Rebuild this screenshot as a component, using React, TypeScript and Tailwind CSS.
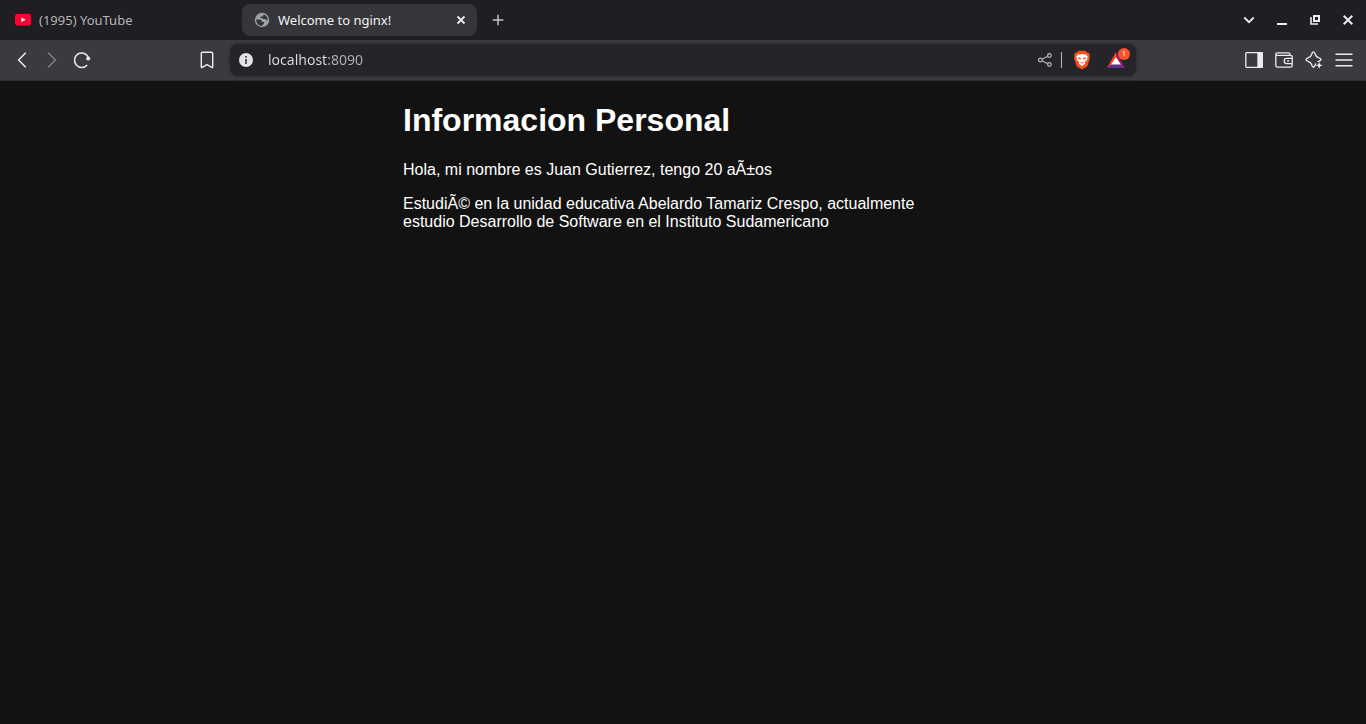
import type { ReactNode } from "react";

type IconButtonProps = {
  label: string;
  children: ReactNode;
  className?: string;
  disabled?: boolean;
};

function IconButton({ label, children, className = "", disabled }: IconButtonProps) {
  return (
    <button
      type="button"
      aria-label={label}
      disabled={disabled}
      className={`flex shrink-0 items-center justify-center ${className}`}
    >
      {children}
    </button>
  );
}

const stroke = { fill: "none", stroke: "currentColor" } as const;

function TabBar() {
  return (
    <header className="flex h-10 items-center justify-between bg-[#1f1e23] text-[#ececee]">
      <div className="flex items-center">
        <div className="w-[242px]">
          <a href="#youtube" className="flex items-center gap-2 pl-[15px] text-[13px] leading-5 text-[#b4b4b6]">
            <svg width="16" height="12" viewBox="0 0 16 12" aria-hidden="true">
              <rect width="16" height="11.5" rx="2.8" fill="#ff0033" />
              <path d="M6.3 3.5 10.7 5.8 6.3 8.1Z" fill="#fff" />
            </svg>
            (1995) YouTube
          </a>
        </div>
        <div className="flex h-8 w-[235px] items-center justify-between rounded-lg bg-[#36353a] pl-3 pr-2">
          <a href="#nginx" className="flex items-center gap-2 text-[13px] leading-5 text-[#f2f2f3]">
            <svg width="16" height="16" viewBox="0 0 16 16" aria-hidden="true">
              <circle cx="8" cy="8" r="7.2" fill="#9aa0a6" />
              <path
                d="M9.6 2.4C12 3.2 13.7 5.3 13.8 7.9L12.4 8.2C12 7.3 11.4 7 10.6 7H8.6V5.9H6.6V4.6H8C8.8 4.6 9.3 4 9.3 3.3Z M2.2 7.4H5.8C7 7.4 7.9 8.3 7.9 9.4V10.1H10V12.2H8.6V13.8C5.2 14 2.2 11.3 2.2 7.9Z"
                fill="#36353a"
              />
            </svg>
            Welcome to nginx!
          </a>
          <IconButton label="Close tab" className="size-4">
            <svg width="10" height="10" viewBox="0 0 10 10" {...stroke} strokeWidth="1.8">
              <path d="M1.5 1.5 8.5 8.5M8.5 1.5 1.5 8.5" />
            </svg>
          </IconButton>
        </div>
        <IconButton label="New tab" className="ml-[7px] size-7 text-[#c4c4c7]">
          <svg width="12" height="12" viewBox="0 0 12 12" {...stroke} strokeWidth="1.5">
            <path d="M6 .7V11.3M.7 6H11.3" />
          </svg>
        </IconButton>
      </div>
      <div className="flex items-center gap-[17px] pr-[10px]">
        <IconButton label="Search tabs" className="size-4">
          <svg width="12" height="8" viewBox="0 0 12 8" {...stroke} strokeWidth="1.8">
            <path d="M1.3 1.5 6 6.2 10.7 1.5" />
          </svg>
        </IconButton>
        <IconButton label="Minimize" className="size-4">
          <svg width="10" height="10" viewBox="0 0 10 10" fill="currentColor">
            <path d="M0 8H10V10H0Z" />
          </svg>
        </IconButton>
        <IconButton label="Restore" className="size-4">
          <svg width="10" height="10" viewBox="0 0 10 10" {...stroke} strokeWidth="2">
            <path d="M4 1H9V6H4Z" />
            <path d="M1 2V9H8" strokeWidth="1.6" />
          </svg>
        </IconButton>
        <IconButton label="Close window" className="size-4">
          <svg width="10" height="10" viewBox="0 0 10 10" {...stroke} strokeWidth="2">
            <path d="M.7 .7 9.3 9.3M9.3 .7 .7 9.3" />
          </svg>
        </IconButton>
      </div>
    </header>
  );
}

function BraveIcon() {
  return (
    <svg width="18" height="20" viewBox="0 0 18 20">
      <path
        d="M5.5 .8H12.5L14 2.5 15.8 2.7 17 5 16.4 6.2 17 7.7 14.9 14.8C14.6 15.9 14 16.6 13 17.3L9 19.6 5 17.3C4 16.6 3.4 15.9 3.1 14.8L1 7.7 1.6 6.2 1 5 2.2 2.7 4 2.5Z"
        fill="#f4511e"
      />
      <path
        d="M5.2 4.2 7 4.6 9 4.1 11 4.6 12.8 4.2 14.8 6.6 14.2 8.3 14.4 9.4 11.9 12 12 13.8 9 16 6 13.8 6.1 12 3.6 9.4 3.8 8.3 3.2 6.6Z"
        fill="#fff"
      />
      <path
        d="M4.8 7.2 7.8 7.9 7.6 9.7 5.6 8.9Z M13.2 7.2 10.2 7.9 10.4 9.7 12.4 8.9Z M6.6 11.9 9 12.6 11.4 11.9 9 13.8Z"
        fill="#f4511e"
      />
    </svg>
  );
}

function RewardsIcon() {
  return (
    <svg width="18" height="16" viewBox="0 0 18 16">
      <path d="M9 0 0 16 4.5 13.2 9 5.5Z" fill="#ff4724" />
      <path d="M9 0 18 16 13.5 13.2 9 5.5Z" fill="#9e1f63" />
      <path d="M0 16H18L13.5 12.3H4.5Z" fill="#662d91" />
      <path d="M9 5 13.8 12.6H4.2Z" fill="#fff" />
    </svg>
  );
}

function AddressBar() {
  return (
    <div className="flex h-8 min-w-0 flex-1 items-center rounded-lg bg-[#252429] pl-2 pr-[10px] shadow-[0_0_4px_rgba(0,0,0,0.35)]">
      <IconButton label="Site information" className="size-4">
        <svg width="14" height="14" viewBox="0 0 14 14">
          <circle cx="7" cy="7" r="7" fill="#e4e4e8" />
          <path d="M6 6H8V11H6ZM6 3H8V4.8H6Z" fill="#5a595f" />
        </svg>
      </IconButton>
      <input
        type="text"
        aria-label="Address"
        defaultValue="localhost:8090"
        className="ml-[14px] h-7 min-w-0 flex-1 bg-[linear-gradient(to_right,#dededf_60px,#b2b2b5_60px)] bg-clip-text pb-[2px] text-sm text-transparent caret-white outline-none"
      />
      <IconButton label="Share" className="size-4 text-[#b9b9bd]">
        <svg width="14" height="14" viewBox="0 0 14 14" {...stroke} strokeWidth="1.2">
          <circle cx="2.4" cy="7" r="1.8" />
          <circle cx="11.4" cy="2.5" r="1.8" />
          <circle cx="11.4" cy="11.5" r="1.8" />
          <path d="M4 6.2 9.8 3.3M4 7.8 9.8 10.7" />
        </svg>
      </IconButton>
      <span className="mx-2 h-4 w-px shrink-0 bg-[#b9b9bd]" />
      <IconButton label="Brave Shields" className="ml-[3px]">
        <BraveIcon />
      </IconButton>
      <IconButton label="Brave Rewards, 1 notification" className="relative ml-[15px] h-6 w-5">
        <RewardsIcon />
        <span className="absolute -right-1 top-0 flex size-3 items-center justify-center rounded-full bg-[#fb542b] text-[7px] leading-3 text-white">
          1
        </span>
      </IconButton>
    </div>
  );
}

function Toolbar() {
  return (
    <nav
      aria-label="Browser toolbar"
      className="flex h-[41px] items-center border-b border-[#2d2c31] bg-[#3b3a3f] text-[#ececee]"
    >
      <div className="flex w-[230px] shrink-0 items-center justify-between pl-3 pr-[13px]">
        <div className="flex gap-[10px]">
          <IconButton label="Back" className="size-5">
            <svg width="10" height="16" viewBox="0 0 10 16" {...stroke} strokeWidth="1.5">
              <path d="M8.8 .7 1.6 8 8.8 15.3" />
            </svg>
          </IconButton>
          <IconButton label="Forward" className="size-5 opacity-40" disabled>
            <svg width="10" height="16" viewBox="0 0 10 16" {...stroke} strokeWidth="1.5">
              <path d="M1.2 .7 8.4 8 1.2 15.3" />
            </svg>
          </IconButton>
          <IconButton label="Reload" className="size-5">
            <svg width="18" height="18" viewBox="0 0 18 18" {...stroke} strokeWidth="1.5">
              <path d="M15.2 6A7.2 7.2 0 1 0 14.2 13.9" />
              <circle cx="15.2" cy="7.4" r="2" fill="currentColor" stroke="none" />
            </svg>
          </IconButton>
        </div>
        <IconButton label="Bookmark this page" className="size-5">
          <svg width="14" height="18" viewBox="0 0 14 18" {...stroke} strokeWidth="1.4" strokeLinejoin="round">
            <path d="M2.6 1.2H11.4Q12.7 1.2 12.7 2.5V15.9Q12.7 16.9 11.8 16.3L7 13.6 2.2 16.3Q1.3 16.9 1.3 15.9V2.5Q1.3 1.2 2.6 1.2Z" />
          </svg>
        </IconButton>
      </div>
      <AddressBar />
      <div className="flex w-[230px] shrink-0 items-center justify-end gap-[10px] pr-3">
        <IconButton label="Sidebar" className="size-5">
          <svg width="18" height="16" viewBox="0 0 18 16" {...stroke} strokeWidth="1.3">
            <rect x=".8" y=".7" width="16.4" height="14.6" rx="1" />
            <path d="M13 .7H17.2V15.3H13Z" fill="currentColor" />
          </svg>
        </IconButton>
        <IconButton label="Wallet" className="size-5">
          <svg width="18" height="16" viewBox="0 0 18 16" {...stroke} strokeWidth="1.3">
            <path d="M14.8 3.3V2Q14.8 .8 13.6 .8H2.3Q.8 .8 .8 2.2V13.5Q.8 15.2 2.5 15.2H15.5Q17.2 15.2 17.2 13.5V4.8Q17.2 3.3 15.6 3.3H2.3Q.8 3.3 .8 2" />
            <path d="M17.2 6.4H11.8A2.6 2.6 0 0 0 11.8 11.6H17.2M12.2 9H14" />
          </svg>
        </IconButton>
        <IconButton label="Leo AI" className="size-5">
          <svg width="18" height="18" viewBox="0 0 18 18" {...stroke} strokeWidth="1.4" strokeLinejoin="round">
            <path d="M10.8 12.6C10 14.8 9.4 16.2 8.5 16.2 7.6 16.2 7.1 15.4 6.6 13.6 6.1 11.9 5.3 11.2 3.5 10.6 1.7 10 .9 9.4 .9 8.6 .9 7.8 1.7 7.2 3.5 6.6 5.3 6 6.1 5.2 6.6 3.5 7.1 1.7 7.6 .9 8.4 .9 9.2 .9 9.8 1.7 10.3 3.5 10.8 5.2 11.6 6 13.4 6.6 15.2 7.2 16 7.8 16 8.6 16 9.5 14.7 10.1 12.6 10.8" />
            <path d="M14.2 11 15.2 13.4 17.6 14.3 15.2 15.3 14.2 17.7 13.2 15.3 10.8 14.3 13.2 13.4Z" fill="currentColor" stroke="none" />
          </svg>
        </IconButton>
        <IconButton label="Menu" className="size-5">
          <svg width="18" height="14" viewBox="0 0 18 14" {...stroke} strokeWidth="1.4">
            <path d="M1 1.3H17M1 7H17M1 12.7H17" strokeLinecap="round" />
          </svg>
        </IconButton>
      </div>
    </nav>
  );
}

export default function App() {
  return (
    <div className="flex min-h-screen flex-col bg-[#121212] font-['Noto_Sans',sans-serif]">
      <TabBar />
      <Toolbar />
      <main className="mx-auto w-full max-w-[560px] pt-5 font-['Liberation_Sans',Arial,sans-serif] text-base leading-[18px] text-white">
        <h1 className="mb-[22px] text-[32px] font-bold leading-[38px]">Informacion Personal</h1>
        <p className="mb-4">Hola, mi nombre es Juan Gutierrez, tengo 20 aÃ±os</p>
        <p>
          EstudiÃ© en la unidad educativa Abelardo Tamariz Crespo, actualmente estudio Desarrollo de Software en el
          Instituto Sudamericano
        </p>
      </main>
    </div>
  );
}
